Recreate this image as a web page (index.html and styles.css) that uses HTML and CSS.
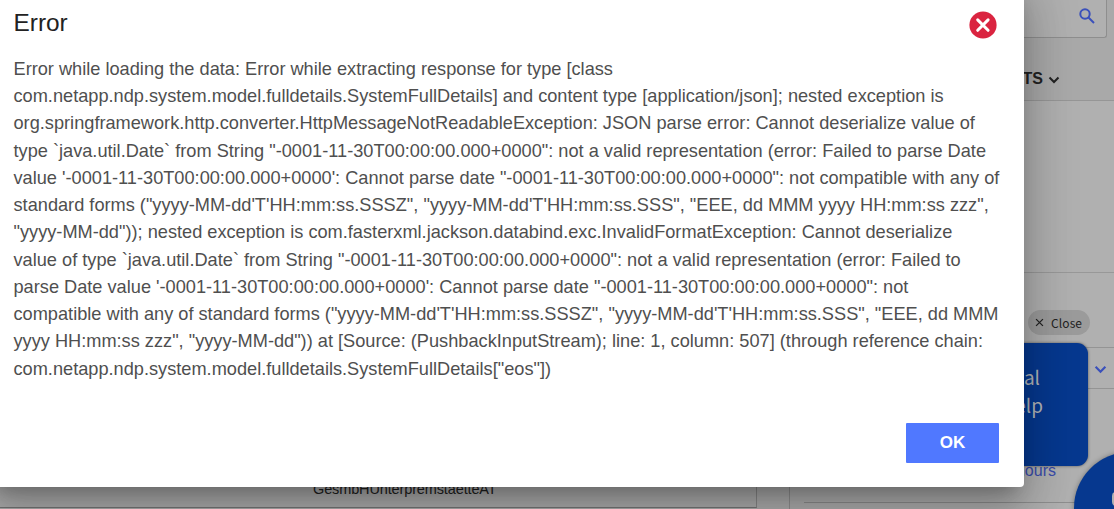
FILE: index.html
```html
<!DOCTYPE html>
<html lang="en">
<head>
    <meta charset="UTF-8">
    <meta name="viewport" content="width=device-width, initial-scale=1.0">
    <title>Error</title>
    <link rel="stylesheet" href="styles.css">
</head>
<body>
    <div class="page">
        <header class="header">
            <div class="search">
                <svg class="icon-search" viewBox="0 0 16 16"><circle cx="6" cy="6" r="4.7"/><path d="M9.5 9.5L15 15"/></svg>
            </div>
            <nav class="nav">
                <span>TS</span>
                <svg class="icon-chevron" viewBox="0 0 12 8"><path d="M1.5 1.5L6 6l4.5-4.5"/></svg>
            </nav>
        </header>
        <div class="banner"></div>
        <main class="content">
            <section class="details">
                <div class="address">GesmbHUnterpremstaetteAT</div>
            </section>
            <aside class="sidebar">
                <div class="panel-row">
                    <svg class="icon-chevron" viewBox="0 0 12 8"><path d="M1.5 1.5L6 6l4.5-4.5"/></svg>
                </div>
                <div class="hours">hours</div>
                <div class="line"></div>
            </aside>
        </main>
    </div>

    <!-- chat -->
    <div class="chat-close">
        <svg class="icon-x" viewBox="0 0 10 10"><path d="M1.2 1.2l7.6 7.6M8.8 1.2L1.2 8.8"/></svg>
        <span>Close</span>
    </div>
    <div class="chat-message">
        <div>Technical</div>
        <div>help</div>
    </div>
    <div class="chat-button"><span></span></div>

    <!-- error dialog -->
    <div class="modal">
        <div class="modal-header">
            <h2>Error</h2>
            <svg class="icon-close" viewBox="0 0 28 28"><circle cx="14" cy="14" r="13.6"/><path d="M8.7 8.9l10.4 10.4M19.1 8.9L8.7 19.3"/></svg>
        </div>
        <p class="modal-text">
            Error while loading the data: Error while extracting response for type [class<br>
            com.netapp.ndp.system.model.fulldetails.SystemFullDetails] and content type [application/json]; nested exception is<br>
            org.springframework.http.converter.HttpMessageNotReadableException: JSON parse error: Cannot deserialize value of<br>
            type `java.util.Date` from String "-0001-11-30T00:00:00.000+0000": not a valid representation (error: Failed to parse Date<br>
            value '-0001-11-30T00:00:00.000+0000': Cannot parse date "-0001-11-30T00:00:00.000+0000": not compatible with any of<br>
            standard forms ("yyyy-MM-dd'T'HH:mm:ss.SSSZ", "yyyy-MM-dd'T'HH:mm:ss.SSS", "EEE, dd MMM yyyy HH:mm:ss zzz",<br>
            "yyyy-MM-dd")); nested exception is com.fasterxml.jackson.databind.exc.InvalidFormatException: Cannot deserialize<br>
            value of type `java.util.Date` from String "-0001-11-30T00:00:00.000+0000": not a valid representation (error: Failed to<br>
            parse Date value '-0001-11-30T00:00:00.000+0000': Cannot parse date "-0001-11-30T00:00:00.000+0000": not<br>
            compatible with any of standard forms ("yyyy-MM-dd'T'HH:mm:ss.SSSZ", "yyyy-MM-dd'T'HH:mm:ss.SSS", "EEE, dd MMM<br>
            yyyy HH:mm:ss zzz", "yyyy-MM-dd")) at [Source: (PushbackInputStream); line: 1, column: 507] (through reference chain:<br>
            com.netapp.ndp.system.model.fulldetails.SystemFullDetails["eos"])
        </p>
        <div class="modal-footer">
            <button class="btn-ok">OK</button>
        </div>
    </div>
</body>
</html>
```
FILE: styles.css
```css
* {
    box-sizing: border-box;
}

body {
    margin: 0;
    height: 509px;
    position: relative;
    overflow: hidden;
    font-family: "Liberation Sans", Arial, sans-serif;
    background-color: #b0b0b0;
}

svg {
    fill: none;
    display: block;
}

.page {
    height: 509px;
    display: flex;
    flex-direction: column;
}

.header {
    height: 101px;
    flex-shrink: 0;
    display: flex;
    flex-direction: column;
    align-items: flex-end;
    background-color: #a9a9a9;
    border-bottom: 1px solid #969696;
}

.search {
    width: 420px;
    height: 38px;
    margin-right: 7px;
    padding: 8px 11px;
    display: flex;
    justify-content: flex-end;
    background-color: #b0b0b0;
    border: 1px solid #8e8e8e;
    border-top: none;
    border-radius: 0 0 3px 3px;
}

.icon-search {
    width: 16px;
    height: 16px;
    stroke: #3a50bb;
    stroke-width: 2;
}

.nav {
    display: flex;
    align-items: center;
    gap: 5px;
    margin: 31px 54px 0 0;
    font-size: 16px;
    line-height: 20px;
    font-weight: bold;
    color: #222;
}

.icon-chevron {
    width: 12px;
    height: 8px;
    margin-top: 2px;
    stroke: #222;
    stroke-width: 2;
}

.banner {
    height: 172px;
    flex-shrink: 0;
    border-bottom: 1px solid #989898;
}

.content {
    flex: 1;
    display: flex;
    gap: 32px;
}

.details {
    width: 757px;
    height: 235px;
    padding: 206px 0 0 313px;
    border-right: 1px solid #8b8b8b;
    border-bottom: 1px solid #777;
}

.address {
    font-size: 14.5px;
    line-height: 20px;
    letter-spacing: -0.13px;
    color: #222;
}

.sidebar {
    flex: 1;
    border-left: 1px solid #929292;
}

.panel-row {
    height: 42px;
    margin-top: 74px;
    padding-right: 7px;
    display: flex;
    align-items: center;
    justify-content: flex-end;
    border-top: 1px solid #949494;
    border-bottom: 1px solid #949494;
}

.panel-row .icon-chevron {
    width: 13px;
    height: 9px;
    margin-top: 3px;
    stroke: #3a50bb;
}

.hours {
    margin-top: 73px;
    padding-right: 58px;
    text-align: right;
    font-size: 16px;
    line-height: 18px;
    color: #3a4cab;
}

.line {
    height: 1px;
    margin: 22px 10px 0 14px;
    background-color: #8e8e8e;
}

/* chat */
.chat-close {
    position: absolute;
    left: 1028px;
    top: 310px;
    width: 62px;
    height: 25px;
    padding-left: 7px;
    display: flex;
    align-items: center;
    gap: 7px;
    border-radius: 13px;
    background-color: #9b9b9b;
    font-family: "Noto Sans CJK SC", sans-serif;
    font-size: 12px;
    letter-spacing: 0.1px;
    color: #222;
}

.icon-x {
    width: 9px;
    height: 9px;
    stroke: #222;
    stroke-width: 1.4;
}

.chat-message {
    position: absolute;
    left: 900px;
    top: 343px;
    width: 188px;
    height: 123px;
    padding: 20px 45px 0 0;
    border-radius: 11px;
    background-color: #06388f;
    box-shadow: 0 0 3px rgba(0, 0, 0, 0.5);
    font-family: "Noto Sans CJK SC", sans-serif;
    font-size: 19px;
    line-height: 28px;
    text-align: right;
    color: #b2b4b8;
}

.chat-message div:first-child {
    padding-right: 3px;
}

.chat-button {
    position: absolute;
    left: 1074px;
    top: 452px;
    width: 112px;
    height: 112px;
    padding: 40px 0 0 38px;
    border-radius: 50%;
    background-color: #06388f;
    box-shadow: 0 0 5px rgba(0, 0, 0, 0.35);
}

.chat-button span {
    display: block;
    width: 30px;
    height: 14px;
    border: 2px solid #b0b0b0;
    border-radius: 4px;
}

/* modal */
.modal {
    position: absolute;
    left: -11px;
    top: -20px;
    width: 1035px;
    height: 507px;
    padding: 28px 25px 0 24.5px;
    background-color: #fff;
    border-radius: 4px;
    box-shadow: 0 12px 17px -8px rgba(0, 0, 0, 0.24), 0 27px 43px 3px rgba(0, 0, 0, 0.16), 0 10px 52px 9px rgba(0, 0, 0, 0.13);
}

.modal-header {
    height: 48px;
    display: flex;
    justify-content: space-between;
}

.modal-header h2 {
    margin: 0;
    font-size: 24.4px;
    line-height: 30px;
    font-weight: normal;
    color: #222;
}

.icon-close {
    width: 28px;
    height: 28px;
    margin: 3px 2px 0 0;
    fill: #da2440;
    stroke-width: 0;
}

.icon-close path {
    stroke: #fff;
    stroke-width: 3;
    stroke-linecap: round;
}

.modal-text {
    margin: 0;
    font-size: 18.19px;
    line-height: 27.23px;
    white-space: nowrap;
    color: #4f4f4f;
}

.modal-footer {
    margin-top: 40px;
    display: flex;
    justify-content: flex-end;
}

.btn-ok {
    width: 93px;
    height: 40px;
    border: none;
    border-radius: 1px;
    background-color: #5078ff;
    font-family: inherit;
    font-size: 17px;
    font-weight: bold;
    color: #fff;
}
```
